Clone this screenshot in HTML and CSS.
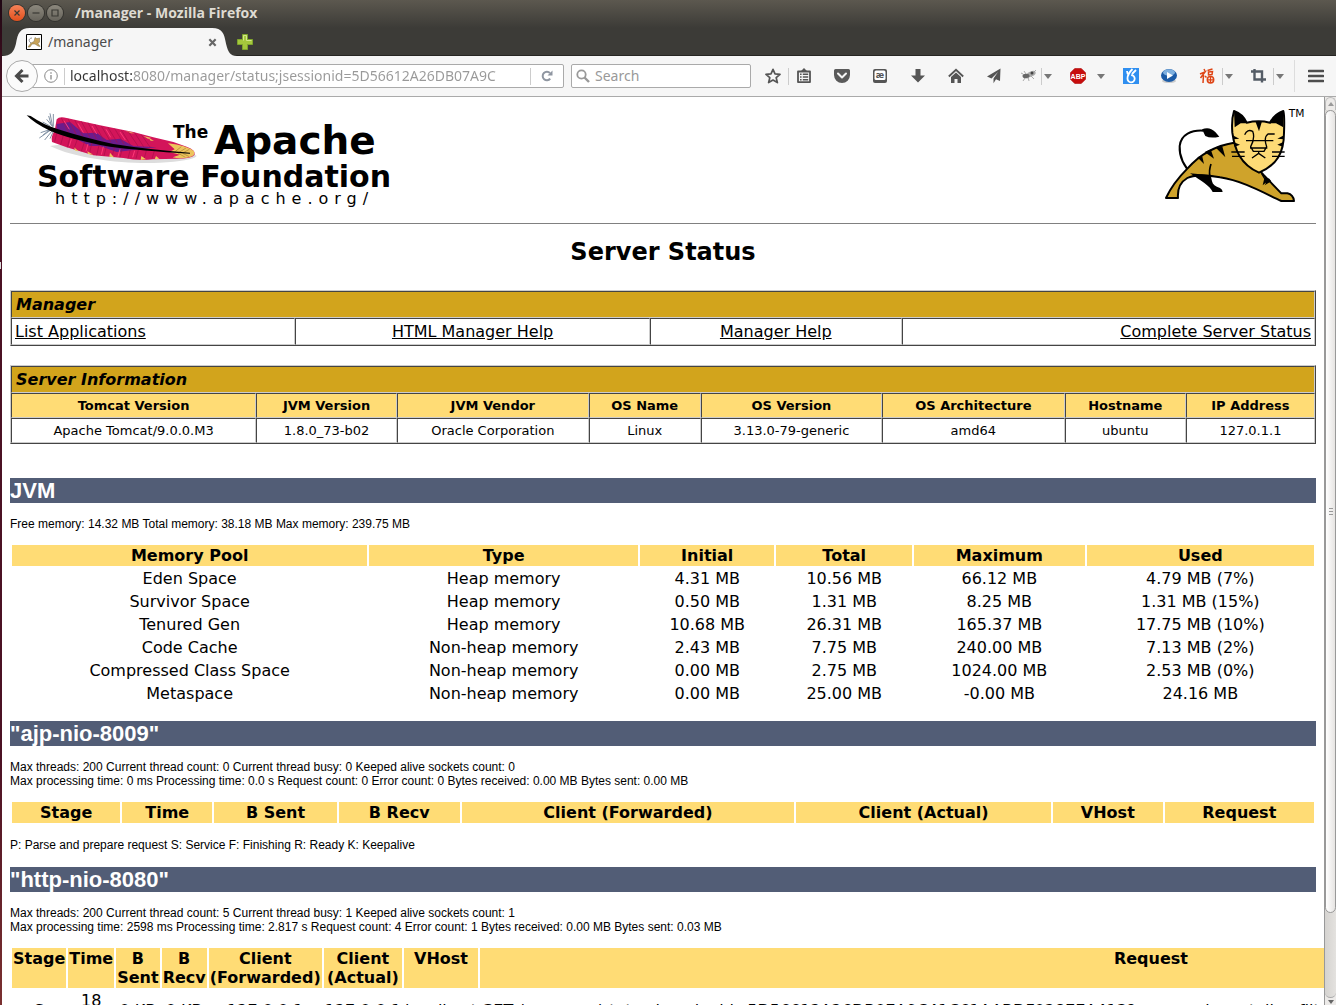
FILE: index.html
```html
<!DOCTYPE html>
<html lang="en">
<head>
<meta charset="utf-8">
<title>/manager</title>
<link rel="stylesheet" href="styles.css">
</head>
<body>
<div class="desktop-edge"><span class="launcher-mark"></span></div>
<div class="window">
  <header class="titlebar">
    <button class="wm wm-close" aria-label="Close"><svg viewBox="0 0 16 16"><path d="M5.5 5.5l5 5M10.500 5.500l-5 5"/></svg></button>
    <button class="wm" aria-label="Minimize"><svg viewBox="0 0 16 16"><path d="M4.500 8h7"/></svg></button>
    <button class="wm" aria-label="Maximize"><svg viewBox="0 0 16 16"><path d="M5 5h6v6H5z"/></svg></button>
    <span class="window-title">/manager - Mozilla Firefox</span>
  </header>
  <nav class="tabs">
    <div class="tab">
      <svg class="tab-shape" viewBox="0 0 237 28" preserveAspectRatio="none"><path fill="#f6f6f6" d="M0 28C9 28 12 24 14 16C16 5 18 0 28 0H212C222 0 224 5 226 16C228 24 230 28 237 28Z"/></svg>
      <svg class="favicon" viewBox="0 0 16 16"><path fill="#fff" stroke="#000" d="M.5.5h15v15H.5z"/><path fill="#c9a45a" stroke="#7a6a40" stroke-width=".5" d="M2 13l3-4 3-1.500 1-4 1.500 1h1.500L13.500 4v4l-1.500 1.500 2 3-2-.5-3-2-3 0-2 3z"/><path fill="none" stroke="#777" stroke-width=".8" d="M5 9C2 7 3 4 6 4"/></svg>
      <span class="tab-label">/manager</span>
      <button class="tab-close" aria-label="Close tab"><svg viewBox="0 0 10 10"><path d="M1.500 1.500l7 7M8.500 1.500l-7 7" stroke="#666" stroke-width="2.400"/></svg></button>
    </div>
    <button class="new-tab" aria-label="New tab"><svg viewBox="0 0 16 16"><path fill="#a5c83c" stroke="#7fa52c" d="M5.500.5h5v5h5v5h-5v5h-5v-5h-5v-5h5z"/><path fill="none" stroke="#d3e88a" d="M6.500 6.500v-5h3v5h5"/></svg></button>
  </nav>
  <div class="toolbar">
    <button class="back" aria-label="Back"><svg viewBox="0 0 16 16"><path d="M14.500 8H3M8.500 2L2.500 8l6 6" fill="none" stroke="#4a4a4a" stroke-width="3"/></svg></button>
    <div class="urlbar">
      <svg class="info" viewBox="0 0 14 14"><circle cx="7" cy="7" r="6.300" fill="none" stroke="#888"/><path d="M7 6v4.500M7 3.200v1.500" stroke="#888" stroke-width="1.300"/></svg>
      <i class="vline"></i>
      <input class="url" type="text" aria-label="Address" value="localhost:8080/manager/status;jsessionid=5D56612A26DB07A9C">
      <i class="vline"></i>
      <button class="reload" aria-label="Reload"><svg viewBox="0 0 12 12"><path d="M9.200 8.600A4.200 4.200 0 1 1 9 3.200" fill="none" stroke="#8f96a1" stroke-width="2"/><path fill="#8f96a1" d="M11.500.5v5h-5z"/></svg></button>
    </div>
    <label class="search">
      <svg viewBox="0 0 14 14"><circle cx="5.500" cy="5.500" r="4.200" fill="none" stroke="#999" stroke-width="1.800"/><path d="M8.500 8.500l4.500 4.500" stroke="#999" stroke-width="2.400"/></svg>
      <input type="text" aria-label="Search" placeholder="Search">
    </label>
    <div class="tools">
      <div class="star-group"><button class="tool" aria-label="Bookmark"><svg viewBox="0 0 16 16"><path fill="none" stroke="#555" stroke-width="1.700" stroke-linejoin="round" d="M8 1.300l2 4.600 5 .5-3.800 3.300 1.200 4.900L8 12l-4.400 2.600 1.200-4.900L1 6.400l5-.5z"/></svg></button><i class="vline"></i></div>
      <button class="tool" aria-label="Bookmarks list"><svg viewBox="0 0 16 16"><path fill="none" stroke="#555" stroke-width="1.800" stroke-linejoin="round" d="M2 3.500h12v10.600H2z"/><path fill="#555" d="M8 0l3.500 3.500h-7zM4 5.500h1.600v1.500H4zM6.800 5.500h5.400v1.500H6.800zM4 8.200h1.600v1.500H4zM6.800 8.200h5.400v1.500H6.800zM4 10.900h1.600v1.500H4zM6.800 10.900h5.400v1.500H6.800z"/></svg></button>
      <button class="tool" aria-label="Pocket"><svg viewBox="0 0 16 16"><path fill="#5a5a5a" d="M1.500 1h13A1.500 1.500 0 0 1 16 2.500V7A8 8 0 0 1 0 7V2.500A1.500 1.500 0 0 1 1.500 1z"/><path fill="none" stroke="#f6f6f6" stroke-width="2" stroke-linecap="round" stroke-linejoin="round" d="M4 5.500l4 4 4-4"/></svg></button>
      <button class="tool" aria-label="Character keyboard"><svg viewBox="0 0 16 16"><rect x="1" y="1" width="14" height="14" rx="2" fill="#555"/><rect x="2.500" y="2.500" width="11" height="9.500" rx="1.500" fill="#fff"/><text x="8" y="9.500" text-anchor="middle" class="ae">æ</text></svg></button>
      <button class="tool" aria-label="Downloads"><svg viewBox="0 0 16 16"><path fill="#555" d="M5.500 1h5v6.500H15l-7 7-7-7h4.500z"/></svg></button>
      <button class="tool" aria-label="Home"><svg viewBox="0 0 16 16"><path fill="none" stroke="#555" stroke-width="1.800" d="M.8 8.500L8 1.800l7.200 6.700"/><path fill="#555" d="M8 4.500l5 4.500v6H9.500v-4h-3v4H3V9z"/></svg></button>
      <button class="tool" aria-label="Share"><svg viewBox="0 0 16 16"><path fill="#555" d="M14.500.5L14 13l-4-1.800-2.500 4V10.500l4.500-6.500L5.500 10.500 1 8.500z"/></svg></button>
      <div class="split"><button class="tool narrow" aria-label="Firebug"><svg viewBox="0 0 16 16"><ellipse cx="10" cy="6" rx="5" ry="2.600" fill="#aaa" transform="rotate(-25 10 6)"/><ellipse cx="5" cy="8" rx="3.500" ry="2.300" fill="#666"/><path d="M2 6L0 5M4 10l-2 3M7 9l1 4M10 8l3 3M5 6L3 3M13 4l2-2" stroke="#999" stroke-width=".8"/><circle cx="11" cy="5" r="1.500" fill="#444"/></svg></button><i class="vline"></i><button class="drop" aria-label="Firebug menu"></button></div>
      <div class="split wide"><button class="tool" aria-label="Adblock Plus"><svg viewBox="0 0 16 16"><path fill="#c70d0d" stroke="#a00" stroke-width=".6" d="M4.800.4h6.400l4.400 4.400v6.400l-4.400 4.400H4.800L.4 11.200V4.800z"/><text x="8" y="10.500" text-anchor="middle" class="abp">ABP</text></svg></button><button class="drop" aria-label="Adblock menu"></button></div>
      <button class="tool" aria-label="Counter"><svg viewBox="0 0 16 16"><path fill="#2f8ff0" d="M0 0h16v16H0z"/><path fill="none" stroke="#fff" stroke-width="1.800" d="M4 3c0 2 .5 3 2 4M9.500 1C6.500 4 4.500 6.500 4.500 10.500a3.600 3.600 0 1 0 3.600-3.400M9 6l4-4"/></svg></button>
      <button class="tool" aria-label="Player"><svg viewBox="0 0 16 16"><ellipse cx="8" cy="13" rx="7" ry="2" fill="#ccc"/><ellipse cx="8" cy="7.500" rx="8" ry="6.500" fill="#1c5ba6"/><ellipse cx="8" cy="4.500" rx="6" ry="3.200" fill="#7fb0df"/><path fill="#fff" d="M6 4l6 3.500L6 11z"/></svg></button>
      <div class="split"><button class="tool" aria-label="Fortune"><svg viewBox="0 0 16 16"><path fill="none" stroke="#de4415" stroke-width="1.500" d="M5 1l1 2M1 6l5-2-4.500 6M4.500 7L4 15M6 8l1.500 1.500M8.500 2.500l5-1.500M9.500 4l4-.5-.5 3-3.500.5z"/><circle cx="11.500" cy="11.800" r="3.200" fill="none" stroke="#de4415" stroke-width="1.500"/><path stroke="#de4415" stroke-width="1.200" d="M11.500 8.500v6.500M8 11.800h7"/></svg></button><i class="vline"></i><button class="drop" aria-label="Fortune menu"></button></div>
      <div class="split"><button class="tool" aria-label="Crop"><svg viewBox="0 0 16 16"><path fill="none" stroke="#545c66" stroke-width="2.400" d="M1 3.500h11v11M4.500 1v10.500H16"/></svg></button><i class="vline"></i><button class="drop" aria-label="Crop menu"></button></div>
      <div class="menu-group"><i class="vline"></i><button class="menu" aria-label="Menu"><svg viewBox="0 0 16 16"><path d="M1 3h14M1 8h14M1 13h14" stroke="#4d4d4d" stroke-width="2.600" stroke-linecap="round"/></svg></button></div>
    </div>
  </div>
  <div class="viewport">
    <main class="page">
      <div class="logos">
        <a href="#apache" class="asf" aria-label="The Apache Software Foundation">
          <svg width="368" height="106" viewBox="24 8 368 106">
            <g transform="scale(.33333)">
              <path fill="#ddd" d="M150 150C230 190 380 205 480 200C540 196 580 192 590 180L560 160L300 130Z"/>
              <path fill="none" stroke="#8292a4" stroke-width="3" d="M158 92L140 70M158 92L150 52M160 92L160 54M150 90L128 78M158 98L122 110M158 98L118 126M160 100L134 132M162 102L150 128M150 100L128 118M154 88L146 60"/>
              <path fill="#d3155a" d="M170 70Q178 60 200 66L300 88L400 108L460 124L520 138L560 152Q588 162 584 176Q576 188 530 188L460 190Q420 196 370 186L280 178L200 154L156 138Q152 122 164 104Z"/>
              <path fill="#6c1c8c" d="M170 84L210 78L250 112L290 110L320 132L360 128L400 150L470 154L400 162L350 168L300 150L270 150L230 130L170 112Z"/>
              <path fill="none" stroke="#a80d48" stroke-width="2" d="M184 66l22 44M204 68l24 46M224 72l24 48M244 76l26 48M264 80l26 50M284 84l28 50M304 90l28 48M324 94l28 46M344 98l28 46M364 102l28 46M384 106l30 44M404 110l28 44M424 116l28 40M170 112l-6 26M190 118l-8 28M210 124l-8 30M232 130l-10 28M254 136l-10 30M276 140l-8 34M298 144l-8 34M320 148l-8 32M344 152l-8 30M368 154l-8 30M392 156l-8 32M416 158l-8 30M440 160l-8 30M464 162l-8 26"/>
              <path fill="none" stroke="#ff3978" stroke-width="3" d="M192 74l16 26M234 82l16 28M276 90l14 24M318 100l14 24M360 108l16 24M214 130l-6 20M264 144l-6 22M310 152l-6 24M360 160l-6 22M404 164l-6 20"/>
              <path fill="#edc45d" d="M504 142Q560 148 582 166Q588 180 568 184Q540 190 518 184L540 176L508 168L524 160ZM222 154l14 12-10-2zM262 166l18 10-16-2zM424 180l14 10-16 2zM376 104l28 8-10 0zM430 120l24 6-10 2zM446 126l16 8-10 0zM330 170l12 14-14-2zM468 180l10 8-14 2z"/>
              <path fill="none" stroke="#8b6a20" stroke-width="1.500" d="M524 168l20-16M536 170l22-14M550 170l18-10M532 170l24 14M548 172l20 10"/>
              <path fill="#000" d="M80 58L92 60Q130 86 170 98Q250 124 340 144Q440 160 570 170V173Q420 164 330 152Q210 130 150 104Q105 84 80 58Z"/>
            </g>
            <text class="asf-the" x="173" y="42">The</text>
            <text class="asf-apache" x="214" y="58">Apache</text>
            <text class="asf-name" x="37" y="91">Software Foundation</text>
            <text class="asf-url" x="55" y="108">http://www.apache.org/</text>
          </svg>
        </a>
        <a href="#tomcat" class="tomcat" aria-label="Tomcat">
          <svg width="148" height="102" viewBox="60 24 444 306">
            <path fill="none" stroke="#000" stroke-width="6" d="M160 240C130 210 117 180 119 150C123 115 155 102 190 104"/>
            <path d="M186 100Q208 90 226 108L238 122Q212 128 196 120Z"/>
            <path fill="#cfa32b" stroke="#000" stroke-width="6" stroke-linejoin="round" d="M78 306C90 280 115 245 142 218C175 180 220 150 282 140L370 236L424 292H442Q460 296 462 315H424C370 290 310 255 240 244C200 236 160 236 142 246C118 260 112 280 114 306Z"/>
            <path d="M150 232L212 238L216 256C218 266 226 272 240 276Q248 280 248 288H218C210 270 185 256 150 232Z"/>
            <path fill="none" stroke="#000" stroke-width="5" d="M213 204Q206 224 210 242"/>
            <path d="M172 184L192 204L186 178ZM194 168L222 188L212 160ZM226 154L256 184L246 148ZM362 232L374 252L372 236ZM374 242L368 268L388 252ZM386 246L374 268L394 256Z"/>
            <path fill="#fddb76" stroke="#000" stroke-width="6" stroke-linejoin="round" d="M282 45Q308 54 320 80Q356 72 390 80Q404 54 430 45Q434 60 432 110C432 170 410 208 357 230C300 205 284 160 277 110Q274 70 282 45Z"/>
            <path d="M282 45Q308 54 320 82L302 82L284 94ZM430 45Q404 54 390 82L408 82L430 94ZM346 76H366L357 106ZM278 118L298 128L280 130ZM280 138L300 146L284 152ZM432 118L412 128L432 130ZM430 138L412 146L428 152Z"/>
            <path fill="none" stroke="#000" stroke-width="4" d="M314 116Q322 98 338 106Q346 126 332 152L340 166H372L380 152Q370 124 384 114H404M318 134H400M330 156H382M356 166V172L336 186M356 172L376 186M274 168H314M276 181H314M396 168H434M396 181H434"/>
            <text class="tm" x="446" y="63">TM</text>
          </svg>
        </a>
      </div>
      <hr>
      <h2>Server Status</h2>
      <table class="boxed links">
        <colgroup><col class="l1"><col class="l2"><col class="l3"><col></colgroup>
        <tr><th colspan="4" class="bar">Manager</th></tr>
        <tr><td class="left"><a href="#list">List Applications</a></td><td><a href="#html-help">HTML Manager Help</a></td><td><a href="#help">Manager Help</a></td><td class="right"><a href="#complete">Complete Server Status</a></td></tr>
      </table>
      <table class="boxed info-table">
        <colgroup><col class="i1"><col class="i2"><col class="i3"><col class="i4"><col class="i5"><col class="i6"><col class="i7"><col></colgroup>
        <tr><th colspan="8" class="bar">Server Information</th></tr>
        <tr class="small head"><th>Tomcat Version</th><th>JVM Version</th><th>JVM Vendor</th><th>OS Name</th><th>OS Version</th><th>OS Architecture</th><th>Hostname</th><th>IP Address</th></tr>
        <tr class="small"><td>Apache Tomcat/9.0.0.M3</td><td>1.8.0_73-b02</td><td>Oracle Corporation</td><td>Linux</td><td>3.13.0-79-generic</td><td>amd64</td><td>ubuntu</td><td>127.0.1.1</td></tr>
      </table>

      <h1 class="first">JVM</h1>
      <p>Free memory: 14.32 MB Total memory: 38.18 MB Max memory: 239.75 MB</p>
      <table class="data fixed">
        <colgroup><col class="m1"><col class="m2"><col class="m3"><col class="m4"><col class="m5"><col></colgroup>
        <tr><th>Memory Pool</th><th>Type</th><th>Initial</th><th>Total</th><th>Maximum</th><th>Used</th></tr>
        <tr><td>Eden Space</td><td>Heap memory</td><td>4.31 MB</td><td>10.56 MB</td><td>66.12 MB</td><td>4.79 MB (7%)</td></tr>
        <tr><td>Survivor Space</td><td>Heap memory</td><td>0.50 MB</td><td>1.31 MB</td><td>8.25 MB</td><td>1.31 MB (15%)</td></tr>
        <tr><td>Tenured Gen</td><td>Heap memory</td><td>10.68 MB</td><td>26.31 MB</td><td>165.37 MB</td><td>17.75 MB (10%)</td></tr>
        <tr><td>Code Cache</td><td>Non-heap memory</td><td>2.43 MB</td><td>7.75 MB</td><td>240.00 MB</td><td>7.13 MB (2%)</td></tr>
        <tr><td>Compressed Class Space</td><td>Non-heap memory</td><td>0.00 MB</td><td>2.75 MB</td><td>1024.00 MB</td><td>2.53 MB (0%)</td></tr>
        <tr><td>Metaspace</td><td>Non-heap memory</td><td>0.00 MB</td><td>25.00 MB</td><td>-0.00 MB</td><td>24.16 MB</td></tr>
      </table>

      <h1>"ajp-nio-8009"</h1>
      <p>Max threads: 200 Current thread count: 0 Current thread busy: 0 Keeped alive sockets count: 0<br>Max processing time: 0 ms Processing time: 0.0 s Request count: 0 Error count: 0 Bytes received: 0.00 MB Bytes sent: 0.00 MB</p>
      <table class="data fixed">
        <colgroup><col class="a1"><col class="a2"><col class="a3"><col class="a4"><col class="a5"><col class="a6"><col class="a7"><col></colgroup>
        <tr><th>Stage</th><th>Time</th><th>B Sent</th><th>B Recv</th><th>Client (Forwarded)</th><th>Client (Actual)</th><th>VHost</th><th>Request</th></tr>
      </table>
      <p class="legend">P: Parse and prepare request S: Service F: Finishing R: Ready K: Keepalive</p>

      <h1>"http-nio-8080"</h1>
      <p>Max threads: 200 Current thread count: 5 Current thread busy: 1 Keeped alive sockets count: 1<br>Max processing time: 2598 ms Processing time: 2.817 s Request count: 4 Error count: 1 Bytes received: 0.00 MB Bytes sent: 0.03 MB</p>
      <table class="data requests">
        <tr><th>Stage</th><th>Time</th><th>B Sent</th><th>B Recv</th><th>Client (Forwarded)</th><th>Client (Actual)</th><th>VHost</th><th class="request">Request</th></tr>
        <tr><td>S</td><td>18 ms</td><td class="nowrap">0 KB</td><td class="nowrap">0 KB</td><td>127.0.0.1</td><td>127.0.0.1</td><td>localhost</td><td class="nowrap left">GET /manager/status;jsessionid=5D56612A26DB07A9C41C61AABDF0287EA413?org.apache.catalina.filters.CSRF_NONCE=5F0287EA HTTP/1.1</td></tr>
      </table>
    </main>
    <div class="scrollbar"><span class="step up"></span><div class="trough"><div class="thumb"><i></i><i></i><i></i></div></div><span class="step down"></span></div>
  </div>
</div>
</body>
</html>
```
FILE: styles.css
```css
* { box-sizing: border-box; }
body { margin: 0; height: 100vh; display: flex; overflow: hidden; background: #fff; font-family: "DejaVu Sans", Verdana, sans-serif; font-size: 16px; line-height: 19px; color: #000; }
button { border: 0; padding: 0; margin: 0; background: none; display: flex; align-items: center; justify-content: center; }
svg { display: block; }

.desktop-edge { width: 2px; flex: none; background: linear-gradient(#1f0713, #4b1124 10%, #4b1124 75%, #7a3030); padding-top: 262px; }
.launcher-mark { display: block; width: 1px; height: 7px; background: #ddd; }
.window { flex: 1; min-width: 0; display: flex; flex-direction: column; }

.titlebar { height: 28px; flex: none; display: flex; align-items: center; gap: 3px; padding: 0 0 3px 7px; background: linear-gradient(#5c584f, #3c3b37); }
.wm { width: 16px; height: 16px; border-radius: 50%; background: linear-gradient(#8c887d, #66635b); box-shadow: 0 0 0 1px #33322e; }
.wm svg { width: 16px; height: 16px; fill: none; stroke: #3a3934; stroke-width: 1.2; }
.wm-close { background: linear-gradient(#f58258, #e2501d); }
.window-title { margin-left: 9px; font: bold 14px/20px "Open Sans", "Noto Sans", sans-serif; color: #dfdbd2; }

.tabs { height: 28px; flex: none; display: flex; align-items: center; background: #3c3b37; box-shadow: inset 0 -1px #262522; }
.tab { position: relative; width: 235px; height: 28px; display: flex; align-items: center; gap: 6px; padding: 0 20px 0 24px; }
.tab-shape { position: absolute; inset: 0; width: 100%; height: 100%; }
.favicon { position: relative; width: 16px; height: 16px; }
.tab-label { position: relative; flex: 1; font: 14px/20px "Noto Sans", "Open Sans", sans-serif; color: #4c4c4c; }
.tab-close { position: relative; width: 10px; height: 10px; }
.tab-close svg { width: 9px; height: 9px; }
.new-tab svg { width: 16px; height: 16px; }
.new-tab { width: 16px; }

.toolbar { height: 41px; flex: none; display: flex; align-items: center; padding-left: 4px; background: #f6f6f6; border-bottom: 1px solid #aaa; }
.back { width: 32px; height: 32px; flex: none; border: 1px solid #aaa; border-radius: 50%; background: #fbfbfb; z-index: 1; }
.back svg { width: 16px; height: 16px; }
.urlbar { flex: 1; min-width: 0; height: 24px; display: flex; align-items: center; margin: 0 7px 0 -8px; padding-left: 13px; border: 1px solid #aaa; border-radius: 2px; background: #fff; }
.info { width: 14px; height: 14px; margin-right: 6px; flex: none; }
.vline { width: 1px; height: 17px; flex: none; background: #ccc; }
.url { flex: 1; min-width: 0; height: 20px; margin: 0 18px 0 5px; padding: 0; border: 0; outline: 0; font: 14px/20px "Noto Sans", "Open Sans", sans-serif; color: transparent; background: linear-gradient(90deg, #333 62px, #999 62px); background-clip: text; -webkit-background-clip: text; }
.reload { width: 32px; height: 20px; }
.reload svg { width: 12px; height: 12px; }
.search { width: 180px; height: 24px; flex: none; display: flex; align-items: center; gap: 5px; padding: 0 4px; border: 1px solid #aaa; border-radius: 2px; background: #fff; }
.search svg { width: 14px; height: 14px; flex: none; }
.search input { flex: 1; min-width: 0; border: 0; padding: 0; outline: 0; background: none; font: 14px/20px "Noto Sans", "Open Sans", sans-serif; }
.search input::placeholder { color: #999; }
.tools { display: flex; align-items: center; gap: 8px; margin-left: 7px; flex: none; }
.star-group { margin-right: -8px; }
.split, .star-group, .menu-group { display: flex; align-items: center; }
.tool { width: 30px; height: 24px; }
.tool svg, .menu svg { width: 16px; height: 16px; }
.narrow { width: 24px; }
.wide .tool { width: 32px; }
.wide .drop { width: 14px; }
.drop { width: 12px; height: 20px; }
.drop::before { content: ""; border: 4px solid transparent; border-top: 5px solid #777; border-bottom: 0; }
.menu-group { height: 36px; }
.menu-group .vline { height: 32px; background: #ddd; }
.menu { width: 41px; height: 24px; }
.ae { font: bold 8px "DejaVu Sans", sans-serif; fill: #555; }
.abp { font: bold 7px "Liberation Sans", sans-serif; fill: #fff; }

.viewport { flex: 1; min-height: 0; display: flex; overflow: hidden; }
.page { flex: 1; min-width: 0; overflow: hidden; padding: 7px 8px; }
.logos { display: flex; justify-content: space-between; align-items: flex-start; height: 119px; padding: 0 8px 0 14px; }
.asf, .tomcat { color: #000; }
.asf svg text { font-family: "DejaVu Sans", Verdana, sans-serif; font-weight: bold; }
.asf svg .asf-the { font-size: 17px; }
.asf svg .asf-apache { font-size: 39px; }
.asf svg .asf-name { font-size: 30px; }
.asf svg .asf-url { font-size: 16px; font-weight: normal; letter-spacing: 6px; }
.tm { font: 32px "DejaVu Sans", sans-serif; }
hr { height: 1px; margin: 0; border: 0; background: #808080; }
h2 { margin: 14px 0 24px; font-size: 24px; line-height: 28px; text-align: center; }

table { width: 100%; }
th, td { text-align: center; }
.left { text-align: left; }
.right { text-align: right; }
.boxed { table-layout: fixed; border: 1px solid; border-color: #ccc #444 #444 #ccc; border-spacing: 0; }
.boxed th, .boxed td { padding: 3px; border: 1px solid; border-color: #444 #ccc #ccc #444; white-space: nowrap; }
.boxed .bar { background: #d2a41c; text-align: left; font-style: italic; padding-left: 4px; }
.boxed a { color: #000; }
.info-table { margin-top: 19px; }
.small { font-size: 13px; line-height: 17px; }
.head th { background: #ffdc75; }
.l1 { width: 21.8%; } .l2 { width: 27.2%; } .l3 { width: 19.3%; }
.i1 { width: 18.8%; } .i2 { width: 10.8%; } .i3 { width: 14.7%; } .i4 { width: 8.6%; } .i5 { width: 13.9%; } .i6 { width: 14%; } .i7 { width: 9.3%; }

h1 { margin: 15px 0 14px; font: bold 22px/25px "Liberation Sans", Arial, sans-serif; color: #fff; background: #525d76; }
h1.first { margin-top: 34px; }
p { margin: 12px 0; font: 12px/14px "Liberation Sans", Arial, sans-serif; }
p.legend { margin-top: 13px; }
h1 + p { margin-top: 14px; }
.data { border-spacing: 2px; }
.data th, .data td { padding: 1px; }
.data th { background: #ffdc75; vertical-align: top; }
.fixed { table-layout: fixed; }
.m1 { width: 27.5%; } .m2 { width: 20.8%; } .m3 { width: 10.4%; } .m4 { width: 10.5%; } .m5 { width: 13.2%; }
.a1 { width: 8.4%; } .a2 { width: 7%; } .a3 { width: 9.5%; } .a4 { width: 9.4%; } .a5 { width: 25.8%; } .a6 { width: 19.8%; } .a7 { width: 8.5%; }
.nowrap { white-space: nowrap; }
.request { min-width: 1342px; }

.scrollbar { width: 12px; flex: none; display: flex; flex-direction: column; border-left: 1px solid #999; background: #eceae8; }
.step { height: 13px; flex: none; display: flex; align-items: center; justify-content: center; }
.step::before { content: ""; border: 3px solid transparent; }
.up { border: 1px solid #bbb; border-bottom: 0; border-radius: 6px 6px 0 0; }
.up::before { border-bottom: 4px solid #999; border-top: 0; }
.down { height: 7px; }
.down::before { border-top: 4px solid #666; border-bottom: 0; }
.trough { flex: 1; border-radius: 0 0 6px 6px; border-bottom: 1px solid #aaa; background: linear-gradient(90deg, #d5d3d0, #e4e2df); }
.thumb { height: 90.5%; display: flex; flex-direction: column; align-items: center; justify-content: center; gap: 2px; border: 1px solid #999; border-radius: 6px; background: linear-gradient(90deg, #fff, #e6e4e2); }
.thumb i { width: 4px; height: 1px; background: #999; }
```
